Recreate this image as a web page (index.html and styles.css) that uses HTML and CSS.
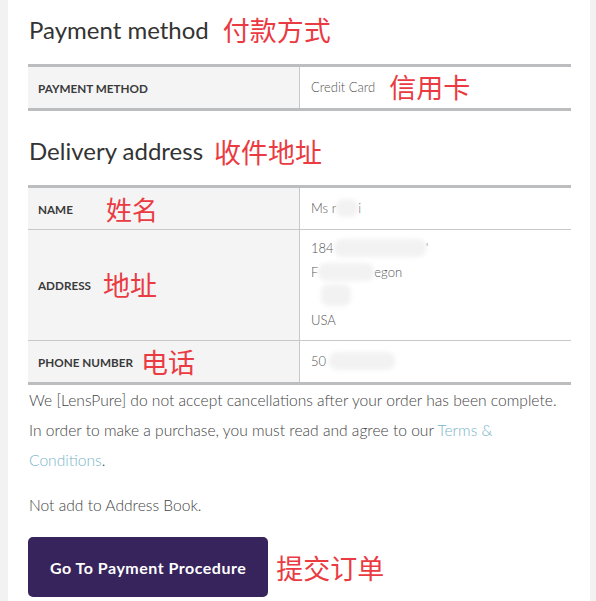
FILE: index.html
```html
<!DOCTYPE html>
<html lang="en">
<head>
<meta charset="utf-8">
<title>Review order</title>
<link rel="stylesheet" href="styles.css">
</head>
<body>
<div class="page">
  <h2 class="title">Payment method<span class="note note-h1">付款方式</span></h2>
  <div class="kv kv-first">
    <div class="row">
      <div class="label">PAYMENT METHOD</div>
      <div class="value">Credit Card<span class="note note-card">信用卡</span></div>
    </div>
  </div>

  <h2 class="title">Delivery address<span class="note note-h2">收件地址</span></h2>
  <div class="kv">
    <div class="row">
      <div class="label">NAME<span class="note note-name">姓名</span></div>
      <div class="value">Ms r<span class="blob blob-name"></span>i</div>
    </div>
    <div class="row row-sep">
      <div class="label">ADDRESS<span class="note note-addr">地址</span></div>
      <div class="value value-addr">
        <div class="line">184<span class="blob blob-a1"></span>'</div>
        <div class="line">F<span class="blob blob-a2"></span>egon</div>
        <div class="line"><span class="blob blob-a3"></span></div>
        <div class="line">USA</div>
      </div>
    </div>
    <div class="row row-sep">
      <div class="label">PHONE NUMBER<span class="note note-phone">电话</span></div>
      <div class="value">50<span class="blob blob-phone"></span></div>
    </div>
  </div>

  <p class="text">We [LensPure] do not accept cancellations after your order has been complete.</p>
  <p class="text">In order to make a purchase, you must read and agree to our <a class="link" href="#">Terms &amp;</a><br><a class="link" href="#">Conditions</a>.</p>
  <p class="text text-gap">Not add to Address Book.</p>

  <div class="actions">
    <button class="btn" type="button">Go To Payment Procedure</button>
    <span class="note note-btn">提交订单</span>
  </div>
</div>
</body>
</html>
```
FILE: styles.css
```css
html, body {
  margin: 0;
  padding: 0;
  height: 601px;
  overflow: hidden;
}
body {
  background: #f2f2f2;
  font-family: Lato, "Noto Sans CJK SC", sans-serif;
  color: #333;
}
.page {
  margin: 0 6px 0 8px;
  background: #fff;
  height: 601px;
  box-sizing: border-box;
  padding: 16px 19px 0 20px;
}
.title {
  margin: 0 0 20px 1px;
  font-size: 24px;
  font-weight: 400;
  line-height: 28px;
  color: #333;
}
.note {
  font-family: "Noto Sans CJK SC", sans-serif;
  font-size: 27px;
  font-weight: 400;
  line-height: 0;
  color: #ea3a42;
  letter-spacing: 0;
}
.note-h1 { margin-left: 14px; vertical-align: -2px; }
.note-h2 { margin-left: 11px; vertical-align: -3px; }
.note-card { margin-left: 14px; vertical-align: -6px; }
.note-name { margin-left: 33px; vertical-align: -7px; font-size: 26px; }
.note-addr { margin-left: 12px; vertical-align: -4px; }
.note-phone { margin-left: 8px; vertical-align: -8px; }

.kv {
  border-top: 3px solid #bcbdbf;
  border-bottom: 3px solid #bcbdbf;
}
.kv-first {
  margin-bottom: 26px;
}
.row {
  display: grid;
  grid-template-columns: 272px 1fr;
}
.row-sep {
  border-top: 1px solid #c8c8c8;
}
.label {
  background: #f4f4f5;
  border-right: 1px solid #c8c8c8;
  display: flex;
  align-items: center;
  padding: 0 10px;
  font-size: 11.7px;
  font-weight: 700;
  color: #3a3a3a;
  line-height: 24px;
  white-space: nowrap;
}
.value {
  padding: 8px 11px 9px;
  font-size: 13px;
  font-weight: 300;
  color: #555;
  line-height: 24px;
}
.value-addr {
  padding: 6px 11px 8px;
}
.line {
  height: 24px;
}
.blob {
  display: inline-block;
  background: #f2f2f2;
  border-radius: 8px;
  filter: blur(2px);
  height: 18px;
  vertical-align: top;
  margin-top: 3px;
}
.blob-name { width: 22px; }
.blob-a1 { width: 92px; }
.blob-a2 { width: 56px; }
.blob-a3 { width: 30px; margin-left: 10px; margin-top: 0; height: 22px; }
.blob-phone { width: 66px; margin-left: 3px; }

.text {
  margin: 0 0 0 1px;
  font-size: 15.6px;
  font-weight: 300;
  line-height: 30px;
  color: #444;
}
.text-gap {
  margin-top: 15px;
}
.link {
  color: #7ab5c9;
  text-decoration: none;
}
.actions {
  margin-top: 17px;
  display: flex;
  align-items: center;
}
.btn {
  height: 60px;
  padding: 0 22px;
  border: 0;
  border-radius: 5px;
  background: #37245c;
  color: #fff;
  font-family: Lato, sans-serif;
  font-size: 16px;
  font-weight: 700;
  letter-spacing: 0.5px;
}
.note-btn {
  margin-left: 8px;
  line-height: 30px;
  position: relative;
  top: 1px;
}
```
